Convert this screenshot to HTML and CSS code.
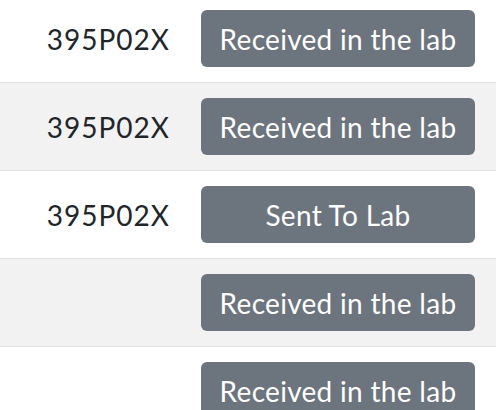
FILE: index.html
```html
<!DOCTYPE html>
<html>
<head>
<meta charset="utf-8">
<link rel="stylesheet" href="styles.css">
</head>
<body>
<div class="table">
  <div class="row first">
    <div class="code">395P02X</div>
    <div class="status"><span class="badge">Received in the lab</span></div>
  </div>
  <div class="row striped">
    <div class="code">395P02X</div>
    <div class="status"><span class="badge">Received in the lab</span></div>
  </div>
  <div class="row">
    <div class="code">395P02X</div>
    <div class="status"><span class="badge">Sent To Lab</span></div>
  </div>
  <div class="row striped">
    <div class="code"></div>
    <div class="status"><span class="badge">Received in the lab</span></div>
  </div>
  <div class="row">
    <div class="code"></div>
    <div class="status"><span class="badge">Received in the lab</span></div>
  </div>
</div>
</body>
</html>
```

FILE: styles.css
```css
html, body {
  margin: 0;
  padding: 0;
  background: #fff;
  overflow: hidden;
}
body {
  font-family: Lato, "Noto Sans", sans-serif;
  color: #212529;
}
.table {
  display: flex;
  flex-direction: column;
}
.row {
  display: flex;
  justify-content: flex-end;
  align-items: center;
  padding: 15px 21px 15px 0;
  border-bottom: 1px solid #dee2e6;
  height: 57px;
}
.row.first {
  padding-top: 10px;
}
.row.striped {
  background: #f2f2f2;
}
.code {
  font-size: 28px;
  margin-right: 31px;
  letter-spacing: 1px;
}
.badge {
  display: flex;
  align-items: center;
  justify-content: center;
  width: 274px;
  height: 57px;
  background: #6c757d;
  color: #fff;
  border-radius: 6px;
  font-size: 28px;
  letter-spacing: 0.3px;
}
```
